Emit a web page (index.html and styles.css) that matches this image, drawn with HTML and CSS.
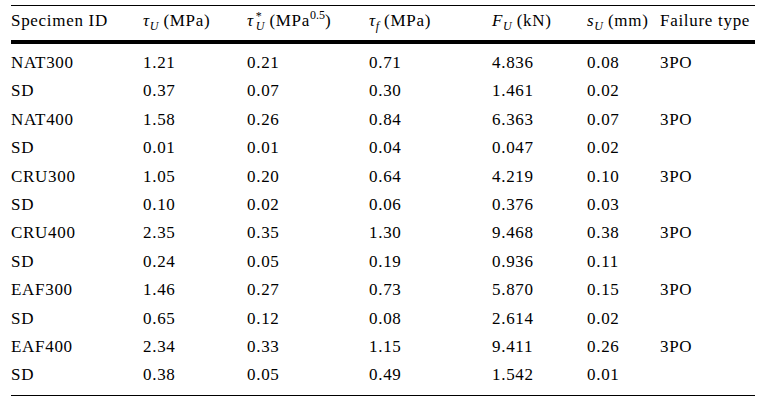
FILE: index.html
```html
<!DOCTYPE html>
<html>
<head>
<meta charset="utf-8">
<link rel="stylesheet" href="styles.css">
</head>
<body>
<div class="data">
  <div class="rule-thin"></div>
  <div class="row head">
    <div>Specimen ID</div>
    <div><i>τ</i><sub><i>U</i></sub> (MPa)</div>
    <div><i>τ</i><sup class="star">*</sup><sub><i>U</i></sub> (MPa<sup>0.5</sup>)</div>
    <div><i>τ</i><sub><i>f</i></sub> (MPa)</div>
    <div><i>F</i><sub><i>U</i></sub> (kN)</div>
    <div><i>s</i><sub><i>U</i></sub> (mm)</div>
    <div>Failure type</div>
  </div>
  <div class="rule-thick"></div>
  <div class="body">
    <div class="row"><div>NAT300</div><div>1.21</div><div>0.21</div><div>0.71</div><div>4.836</div><div>0.08</div><div>3PO</div></div>
    <div class="row"><div>SD</div><div>0.37</div><div>0.07</div><div>0.30</div><div>1.461</div><div>0.02</div><div></div></div>
    <div class="row"><div>NAT400</div><div>1.58</div><div>0.26</div><div>0.84</div><div>6.363</div><div>0.07</div><div>3PO</div></div>
    <div class="row"><div>SD</div><div>0.01</div><div>0.01</div><div>0.04</div><div>0.047</div><div>0.02</div><div></div></div>
    <div class="row"><div>CRU300</div><div>1.05</div><div>0.20</div><div>0.64</div><div>4.219</div><div>0.10</div><div>3PO</div></div>
    <div class="row"><div>SD</div><div>0.10</div><div>0.02</div><div>0.06</div><div>0.376</div><div>0.03</div><div></div></div>
    <div class="row"><div>CRU400</div><div>2.35</div><div>0.35</div><div>1.30</div><div>9.468</div><div>0.38</div><div>3PO</div></div>
    <div class="row"><div>SD</div><div>0.24</div><div>0.05</div><div>0.19</div><div>0.936</div><div>0.11</div><div></div></div>
    <div class="row"><div>EAF300</div><div>1.46</div><div>0.27</div><div>0.73</div><div>5.870</div><div>0.15</div><div>3PO</div></div>
    <div class="row"><div>SD</div><div>0.65</div><div>0.12</div><div>0.08</div><div>2.614</div><div>0.02</div><div></div></div>
    <div class="row"><div>EAF400</div><div>2.34</div><div>0.33</div><div>1.15</div><div>9.411</div><div>0.26</div><div>3PO</div></div>
    <div class="row"><div>SD</div><div>0.38</div><div>0.05</div><div>0.49</div><div>1.542</div><div>0.01</div><div></div></div>
  </div>
  <div class="rule-thin"></div>
</div>
</body>
</html>
```
FILE: styles.css
```css
html, body {
  margin: 0;
  padding: 0;
  background: #fff;
}
body {
  font-family: "Liberation Serif", "Times New Roman", serif;
  font-size: 17px;
  color: #000;
  letter-spacing: 0.7px;
}
.data {
  margin: 5px 0 0 11px;
  width: 744px;
}
.rule-thin {
  height: 1px;
  background: #000;
}
.rule-thick {
  height: 4px;
  background: #000;
}
.row {
  display: grid;
  grid-template-columns: 132px 104px 122px 123px 95px 73px 95px;
  white-space: nowrap;
  line-height: 28.4px;
}
.head {
  height: 34px;
  line-height: 30px;
}
.body {
  padding: 5px 0 5px;
}
sub, sup {
  font-size: 12px;
  line-height: 0;
  letter-spacing: 0;
}
sub { vertical-align: -4px; }
sup { vertical-align: 7px; }
.star {
  display: inline-block;
  width: 0;
  vertical-align: 6px;
  padding-left: 2px;
}
```
